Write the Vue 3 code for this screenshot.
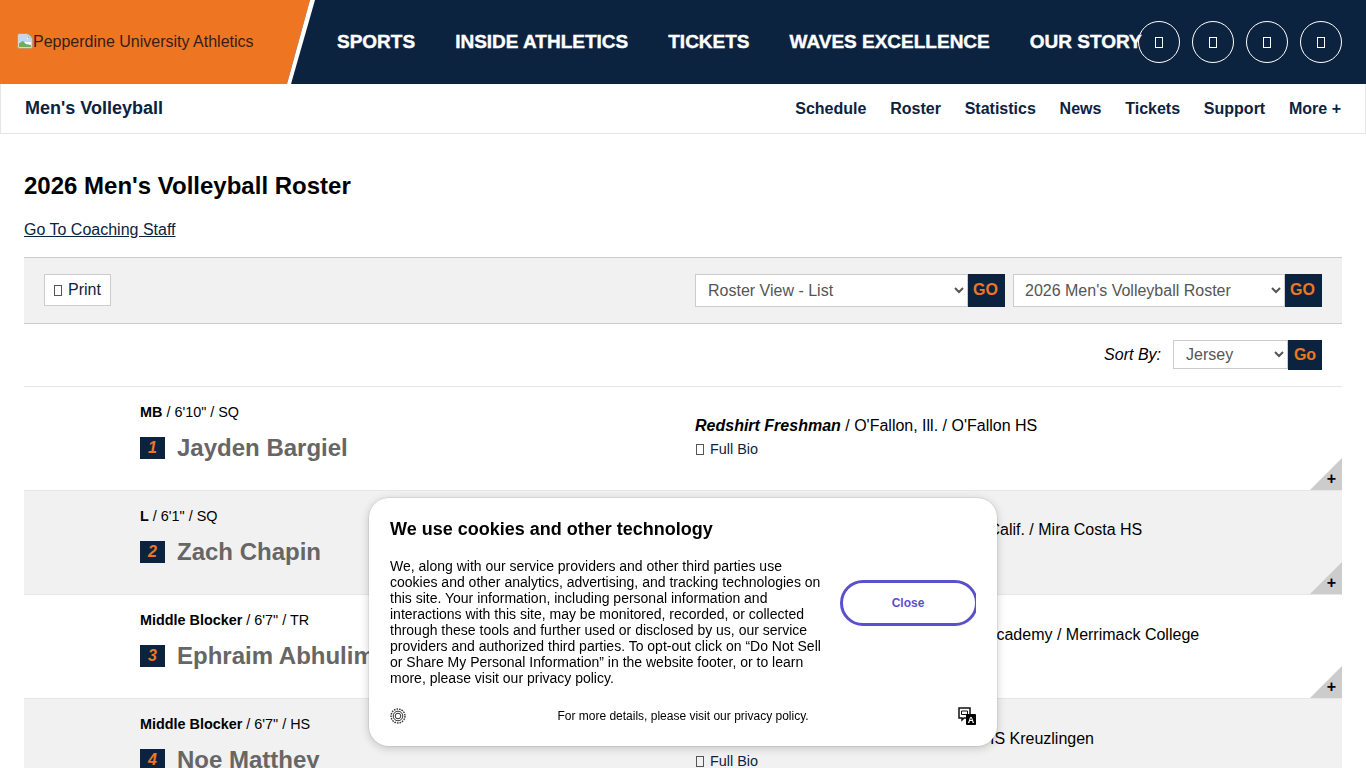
<template>
  <div class="page">
    <header class="top-bar">
      <div class="brand">
        <svg class="broken-img" viewBox="0 0 16 16" width="16" height="16">
          <path d="M1 1h10l4 4v10H1z" fill="#fff" stroke="#a9a9a9" stroke-width="1"/>
          <path d="M11 1v4h4" fill="#ddd" stroke="#a9a9a9" stroke-width="1"/>
          <path d="M2 2h8v4h4v3H2z" fill="#c3d6f5"/>
          <path d="M2 14v-4l4-2 3 3 5 1v2z" fill="#6eb05a"/>
        </svg>
        <span class="brand-alt">Pepperdine University Athletics</span>
      </div>
      <nav class="main-nav">
        <a v-for="item in mainNav" :key="item">{{ item }}</a>
      </nav>
      <div class="circles">
        <span v-for="n in 4" :key="n" class="circle"><i class="tofu"></i></span>
      </div>
    </header>

    <div class="sub-bar">
      <div class="sub-title">Men's Volleyball</div>
      <nav class="sub-nav">
        <a v-for="item in subNav" :key="item">{{ item }}</a>
      </nav>
    </div>

    <main class="content">
      <h1>2026 Men's Volleyball Roster</h1>
      <a class="staff-link">Go To Coaching Staff</a>

      <div class="toolbar">
        <button class="print-btn"><i class="tofu dark"></i>Print</button>
        <div class="pickers">
          <div class="picker">
            <select class="wide-one"><option>Roster View - List</option></select>
            <button class="go">GO</button>
          </div>
          <div class="picker">
            <select class="wide-two"><option>2026 Men's Volleyball Roster</option></select>
            <button class="go">GO</button>
          </div>
        </div>
      </div>

      <div class="sort-row">
        <span class="sort-label">Sort By:</span>
        <div class="picker">
          <select class="sort-select"><option>Jersey</option></select>
          <button class="go small">Go</button>
        </div>
      </div>

      <section
        v-for="(player, i) in players"
        :key="player.name"
        class="player"
        :class="{ shaded: i % 2 === 1 }"
      >
        <div class="player-left">
          <div class="player-meta"><b>{{ player.pos }}</b> / {{ player.size }} / {{ player.year }}</div>
          <div class="player-name">
            <span class="jersey">{{ i + 1 }}</span>
            <span>{{ player.name }}</span>
          </div>
        </div>
        <div class="player-right">
          <div class="player-info"><b><em>{{ player.klass }}</em></b> / {{ player.home }}</div>
          <div class="bio"><i class="tofu dark"></i>Full Bio</div>
        </div>
        <span class="corner"><span class="plus">+</span></span>
      </section>
    </main>

    <aside class="cookie">
      <h2>We use cookies and other technology</h2>
      <div class="cookie-body">
        <p>We, along with our service providers and other third parties use cookies and other analytics, advertising, and tracking technologies on this site. Your information, including personal information and interactions with this site, may be monitored, recorded, or collected through these tools and further used or disclosed by us, our service providers and authorized third parties. To opt-out click on “Do Not Sell or Share My Personal Information” in the website footer, or to learn more, please visit our privacy policy.</p>
        <button class="close-btn">Close</button>
      </div>
      <div class="cookie-foot">
        <svg viewBox="0 0 16 16" width="16" height="16" fill="none" stroke="#333">
          <circle cx="8" cy="8" r="7" stroke-width="1.4" stroke-dasharray="1.6 1"/>
          <circle cx="8" cy="8" r="4.8" stroke-width="1"/>
          <circle cx="8" cy="8" r="2.8" stroke-width="1"/>
        </svg>
        <span class="foot-text">For more details, please visit our privacy policy.</span>
        <svg viewBox="0 0 18 18" width="18" height="18">
          <path d="M1 1h11v10H6l-2 2v-2H1z" fill="#fff" stroke="#111" stroke-width="1.5"/>
          <path d="M3.5 4h6v3.5h-6z" fill="none" stroke="#111" stroke-width="1"/>
          <path d="M8 7h9a1 1 0 0 1 1 1v9a1 1 0 0 1-1 1H9a1 1 0 0 1-1-1z" fill="#000"/>
          <text x="13" y="16" text-anchor="middle" class="lang-a">A</text>
        </svg>
      </div>
    </aside>
  </div>
</template>

<script setup>
const mainNav = ['SPORTS', 'INSIDE ATHLETICS', 'TICKETS', 'WAVES EXCELLENCE', 'OUR STORY']
const subNav = ['Schedule', 'Roster', 'Statistics', 'News', 'Tickets', 'Support', 'More +']

const players = [
  { pos: 'MB', size: `6'10"`, year: 'SQ', name: 'Jayden Bargiel', klass: 'Redshirt Freshman', home: "O'Fallon, Ill. / O'Fallon HS" },
  { pos: 'L', size: `6'1"`, year: 'SQ', name: 'Zach Chapin', klass: 'Redshirt Freshman', home: 'Manhattan Beach, Calif. / Mira Costa HS' },
  { pos: 'Middle Blocker', size: `6'7"`, year: 'TR', name: 'Ephraim Abhulimen', klass: 'Redshirt Junior', home: 'Ada, Calif. / Lawrence Academy / Merrimack College' },
  { pos: 'Middle Blocker', size: `6'7"`, year: 'HS', name: 'Noe Matthey', klass: 'Freshman', home: 'Weinfelden, Switzerland / MHS Kreuzlingen' }
]
</script>

<style>
html, body {
  margin: 0;
  overflow: hidden;
}
</style>

<style scoped>
.page {
  height: 768px;
  overflow: hidden;
  font-family: "Liberation Sans", Arial, sans-serif;
  color: #000;
  background: #fff;
}

/* Top bar */
.top-bar {
  height: 84px;
  background: #0c2340;
  display: flex;
  align-items: center;
  position: relative;
}

.brand {
  width: 337px;
  height: 84px;
  flex: none;
  display: flex;
  align-items: center;
  padding-left: 17px;
  box-sizing: border-box;
  position: relative;
  font-size: 16px;
  color: #3a1d12;
}

.brand::before {
  content: "";
  position: absolute;
  inset: 0;
  background: #ee7623;
  clip-path: polygon(0 0, 310px 0, 287px 84px, 0 84px);
}

.brand::after {
  content: "";
  position: absolute;
  inset: 0;
  background: #fff;
  clip-path: polygon(310px 0, 315px 0, 291px 84px, 287px 84px);
}

.broken-img,
.brand-alt {
  position: relative;
  z-index: 1;
}

.broken-img {
  margin-bottom: 2px;
}

.main-nav {
  display: flex;
  gap: 40px;
  flex: none;
  white-space: nowrap;
}

.main-nav a {
  color: #fff;
  font-size: 19px;
  font-weight: 700;
  -webkit-text-stroke: 0.4px #fff;
}

.circles {
  position: absolute;
  right: 24px;
  top: 21px;
  display: flex;
  gap: 12px;
}

.circle {
  width: 42px;
  height: 42px;
  box-sizing: border-box;
  border: 1px solid #fff;
  border-radius: 50%;
  display: flex;
  align-items: center;
  justify-content: center;
}

.tofu {
  display: inline-block;
  width: 8px;
  height: 11px;
  box-sizing: border-box;
  border: 1px solid #fff;
  flex: none;
}

.tofu.dark {
  border-color: #555;
  margin-right: 6px;
}

/* Sub bar */
.sub-bar {
  height: 50px;
  box-sizing: border-box;
  border: 1px solid #e6e6e6;
  border-top: 0;
  display: flex;
  align-items: center;
  justify-content: space-between;
  padding: 0 24px;
  color: #0c2340;
  font-weight: 700;
}

.sub-title {
  font-size: 18px;
}

.sub-nav {
  display: flex;
  gap: 23.8px;
  font-size: 16px;
}

/* Content */
.content {
  padding: 38px 24px 0;
}

h1 {
  margin: 0;
  font-size: 24px;
  line-height: 28px;
  font-weight: 700;
}

.staff-link {
  display: block;
  margin-top: 21px;
  font-size: 16px;
  line-height: 18px;
  color: #0c2340;
  text-decoration: underline;
}

.toolbar {
  margin-top: 18px;
  height: 67px;
  box-sizing: border-box;
  background: #f1f1f1;
  border-top: 1px solid #ccc;
  border-bottom: 1px solid #ccc;
  display: flex;
  align-items: flex-start;
  justify-content: space-between;
  padding: 16px 20px 0;
}

.print-btn {
  height: 32px;
  width: 67px;
  box-sizing: border-box;
  padding: 0;
  background: #fff;
  border: 1px solid #ccc;
  font: 16px "Liberation Sans", Arial, sans-serif;
  color: #0c2340;
  display: flex;
  align-items: center;
  justify-content: center;
}

.pickers {
  display: flex;
  gap: 8px;
}

.picker {
  display: flex;
  align-items: flex-start;
}

select {
  height: 33px;
  box-sizing: border-box;
  background: #fff;
  border: 1px solid #ccc;
  border-radius: 0;
  font: 16px "Liberation Sans", Arial, sans-serif;
  color: #555;
  padding: 0 8px;
}

.wide-one {
  width: 273px;
}

.wide-two {
  width: 272px;
  padding: 0 7px;
}

.go {
  width: 37px;
  height: 33px;
  padding: 0 2px 1px 0;
  border: 0;
  background: #0c2340;
  color: #ee7623;
  font: 700 16px "Liberation Sans", Arial, sans-serif;
}

.sort-row {
  height: 63px;
  box-sizing: border-box;
  border-bottom: 1px solid #e6e6e6;
  display: flex;
  align-items: center;
  justify-content: flex-end;
  gap: 12px;
  padding-right: 20px;
}

.sort-label {
  font-size: 16px;
  font-style: italic;
}

.sort-select {
  width: 115px;
  height: 29px;
}

.go.small {
  width: 34px;
  height: 30px;
  padding: 0;
}

/* Roster rows */
.player {
  height: 104px;
  box-sizing: border-box;
  border-bottom: 1px solid #e6e6e6;
  display: flex;
  position: relative;
  padding-left: 116px;
}

.player.shaded {
  background: #f1f1f1;
}

.player-left {
  width: 555px;
  flex: none;
  padding-top: 17px;
}

.player-meta {
  font-size: 14.4px;
  line-height: 16px;
}

.player-name {
  display: flex;
  align-items: center;
  gap: 12px;
  margin-top: 14px;
  font-size: 24px;
  line-height: 28px;
  font-weight: 700;
  color: #666;
}

.jersey {
  width: 25px;
  height: 22px;
  background: #0c2340;
  color: #ee7623;
  font-size: 16px;
  line-height: 22px;
  font-style: italic;
  text-align: center;
}

.player-right {
  padding-top: 30px;
}

.player:nth-of-type(n+3) .player-right {
  padding-top: 31px;
}

.player:nth-of-type(n+3) .bio {
  margin-top: 5px;
}

.player-info {
  font-size: 16px;
  line-height: 18px;
  white-space: nowrap;
}

.bio {
  margin-top: 6px;
  padding-left: 1px;
  font-size: 14.4px;
  line-height: 16px;
  color: #0c2340;
  display: flex;
  align-items: center;
}

.corner {
  position: absolute;
  right: 0;
  bottom: 0;
  width: 32px;
  height: 32px;
  background: #ccc;
  clip-path: polygon(100% 0, 100% 100%, 0 100%);
}

.plus {
  position: absolute;
  right: 6px;
  bottom: 3px;
  font-size: 16px;
  line-height: 16px;
  font-weight: 700;
}

/* Cookie dialog */
.cookie {
  position: fixed;
  left: 369px;
  top: 498px;
  width: 628px;
  height: 248px;
  box-sizing: border-box;
  background: #fff;
  border-radius: 20px;
  box-shadow: 0 0 0 1px rgba(0, 0, 0, 0.06), 0 2px 10px rgba(0, 0, 0, 0.2);
  padding: 21px;
  color: #000;
  display: flex;
  flex-direction: column;
}

.cookie h2 {
  margin: 0;
  font-size: 18px;
  line-height: 20px;
  font-weight: 700;
}

.cookie-body {
  display: flex;
  align-items: flex-start;
  margin-top: 19px;
  gap: 18px;
}

.cookie-body p {
  margin: 0;
  width: 432px;
  flex: none;
  font-size: 14px;
  line-height: 16px;
}

.close-btn {
  width: 138px;
  height: 46px;
  flex: none;
  margin-top: 22px;
  box-sizing: border-box;
  background: #fff;
  border: 3px solid #5a50cc;
  border-radius: 23px;
  color: #5a50cc;
  font: 700 12px "Liberation Sans", Arial, sans-serif;
  padding: 0 2px 0 0;
  clip-path: inset(0 2px 0 0);
}

.cookie-foot {
  display: flex;
  align-items: center;
  justify-content: space-between;
  margin-top: 21px;
  font-size: 12px;
}

.foot-text {
  margin-left: 2px;
}

.lang-a {
  font: 700 9px "Liberation Sans", Arial, sans-serif;
  fill: #fff;
}
</style>
